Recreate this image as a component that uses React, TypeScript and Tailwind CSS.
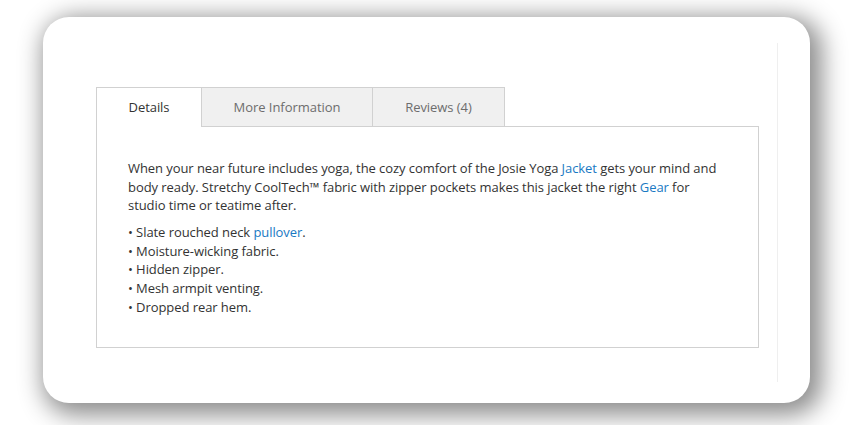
import React from "react";

export default function App() {
  return (
    <div className="w-[853px] h-[425px] bg-white overflow-hidden pt-[17px] pl-[43px]" style={{ fontFamily: '"Open Sans", sans-serif' }}>
      <div className="relative w-[767px] h-[386px] bg-white rounded-[26px] shadow-[6px_6px_24px_6px_rgba(0,0,0,0.45)] pt-[70px] pl-[53px]">
        <div className="absolute left-[734px] top-[26px] h-[339px] w-px bg-[#efefef]" />
        <div className="w-[663px]">
          <div className="flex h-[40px] text-[13px] leading-none tracking-[-0.05px]">
            <div className="w-[106px] flex items-center justify-center border border-b-0 border-[#d1d1d1] bg-white text-[#333]">Details</div>
            <div className="w-[171px] flex items-center justify-center border border-l-0 border-[#d1d1d1] bg-[#f0f0f0] text-[#6d6d6d]">More Information</div>
            <div className="w-[132px] flex items-center justify-center border border-l-0 border-[#d1d1d1] bg-[#f0f0f0] text-[#6d6d6d]">Reviews (4)</div>
            <div className="flex-1 border-b border-[#d1d1d1]" />
          </div>
          <div className="h-[221px] border border-t-0 border-[#d1d1d1] pl-[31px] pr-[30px] pt-[32px] text-[13px] leading-[18.6px] tracking-[-0.07px] text-[#333]">
            <p>
              When your near future includes yoga, the cozy comfort of the Josie Yoga <span className="text-[#1979c3]">Jacket</span> gets your mind and body ready. Stretchy CoolTech™ fabric with zipper pockets makes this jacket the right <span className="text-[#1979c3]">Gear</span> for studio time or teatime after.
            </p>
            <ul className="mt-[8.5px]">
              <li>• Slate rouched neck <span className="text-[#1979c3]">pullover</span>.</li>
              <li>• Moisture-wicking fabric.</li>
              <li>• Hidden zipper.</li>
              <li>• Mesh armpit venting.</li>
              <li>• Dropped rear hem.</li>
            </ul>
          </div>
        </div>
      </div>
    </div>
  );
}
